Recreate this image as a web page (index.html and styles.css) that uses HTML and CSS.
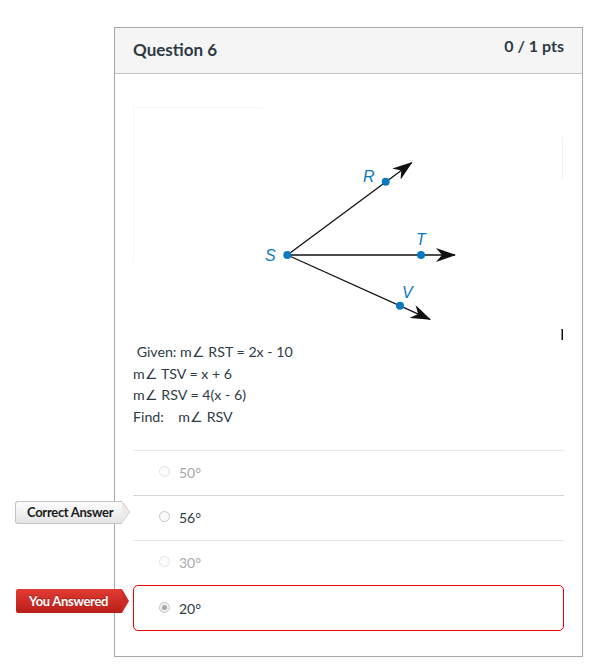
FILE: index.html
```html
<!DOCTYPE html>
<html>
<head>
<meta charset="utf-8">
<link rel="stylesheet" href="styles.css">
</head>
<body>
<div class="page">
  <div class="card">
    <div class="card-header">
      <h2 class="q-title">Question 6</h2>
      <div class="q-pts">0 / 1 pts</div>
    </div>
    <div class="card-body">
      <div class="figure">
        <svg class="diagram" width="430" height="233" viewBox="0 0 430 233">
          <defs>
            <marker id="ah" viewBox="0 0 20 14" refX="19" refY="7" markerWidth="20" markerHeight="14" markerUnits="userSpaceOnUse" orient="auto">
              <path d="M0,0 L20,7 L0,14 L6,7 Z" fill="#111"/>
            </marker>
          </defs>
          <line x1="0.5" y1="0" x2="0.5" y2="156" stroke="#f7f7f7" stroke-width="1"/>
          <line x1="0" y1="0.5" x2="130" y2="0.5" stroke="#f8f8f8" stroke-width="1"/>
          <line x1="429.5" y1="30" x2="429.5" y2="72" stroke="#f0f0f0" stroke-width="1"/>
          <line x1="429.5" y1="222" x2="429.5" y2="233" stroke="#111" stroke-width="2"/>
          <line x1="154.3" y1="148" x2="278.7" y2="55.7" stroke="#111" stroke-width="1.3" marker-end="url(#ah)"/>
          <line x1="154.3" y1="148" x2="322" y2="148" stroke="#111" stroke-width="1.3" marker-end="url(#ah)"/>
          <line x1="154.3" y1="148" x2="297" y2="212.3" stroke="#111" stroke-width="1.3" marker-end="url(#ah)"/>
          <circle cx="154.3" cy="148" r="4" fill="#0a7ac0"/>
          <circle cx="252.7" cy="74.7" r="4" fill="#0a7ac0"/>
          <circle cx="288" cy="148" r="4" fill="#0a7ac0"/>
          <circle cx="267" cy="198.7" r="4" fill="#0a7ac0"/>
          <text class="pt" x="230" y="75">R</text>
          <text class="pt" x="132" y="154">S</text>
          <text class="pt" x="283" y="138">T</text>
          <text class="pt" x="269" y="191">V</text>
        </svg>
      </div>
      <div class="given">
        <p class="line">&nbsp;Given: m∠ RST = 2x - 10</p>
        <p class="line">m∠ TSV = x + 6</p>
        <p class="line">m∠ RSV = 4(x - 6)</p>
        <p class="line">Find:&nbsp;&nbsp;&nbsp; m∠ RSV</p>
      </div>
      <div class="answers">
        <div class="answer light">
          <span class="radio disabled"></span>
          <span class="atext muted">50°</span>
        </div>
        <div class="answer dark">
          <span class="tag tag-correct">Correct Answer</span>
          <span class="radio"></span>
          <span class="atext">56°</span>
        </div>
        <div class="answer light">
          <span class="radio disabled"></span>
          <span class="atext muted">30°</span>
        </div>
        <div class="answer wrong">
          <span class="tag tag-wrong">You Answered</span>
          <span class="radio checked"></span>
          <span class="atext">20°</span>
        </div>
      </div>
    </div>
  </div>
</div>
</body>
</html>
```

FILE: styles.css
```css
html, body {
  margin: 0;
  padding: 0;
  background: #ffffff;
}
body {
  font-family: Lato, "Liberation Sans", sans-serif;
  color: #2d3b45;
}
.page {
  padding: 27px 0 0 114px;
}
.card {
  width: 467px;
  height: 628px;
  border: 1px solid #a8a8a8;
  background: #fff;
}
.card-header {
  height: 45px;
  background: #f5f5f5;
  border-bottom: 1px solid #c4c4c4;
  display: flex;
  justify-content: space-between;
  padding: 0 18px;
}
.q-title {
  margin: 0;
  font-size: 17px;
  font-weight: 700;
  line-height: 45px;
  color: #2d3b45;
  padding-top: 0;
  margin-top: -1px;
}
.q-pts {
  font-size: 16px;
  font-weight: 700;
  line-height: 18px;
  padding-top: 9px;
  color: #2d3b45;
}
.card-body {
  padding: 33px 18px 0 18px;
}
.figure {
  height: 233px;
}
.diagram {
  display: block;
}
.pt {
  font-family: "Liberation Sans", Arial, sans-serif;
  font-style: italic;
  font-size: 16px;
  fill: #0a7ac0;
}
.given {
  margin-top: 1px;
}
.line {
  margin: 0;
  font-size: 14.2px;
  line-height: 21.5px;
  color: #2d3b45;
}
.answers {
  margin-top: 23px;
}
.answer {
  position: relative;
  height: 45px;
  display: flex;
  align-items: center;
  padding-left: 26px;
  padding-bottom: 4px;
  box-sizing: border-box;
  border-top: 1px solid #e8e8e8;
}
.answer.dark {
  border-top-color: #d6d6d6;
}
.answer.wrong {
  border: 1px solid #ee0000;
  border-radius: 5px;
  height: 46px;
  padding-left: 25px;
  padding-bottom: 2px;
}
.radio {
  width: 11px;
  height: 11px;
  border-radius: 50%;
  border: 1px solid #c8c8c8;
  background: #fafafa;
  box-sizing: border-box;
  margin-right: 9px;
  position: relative;
  margin-top: 1px;
}
.radio.disabled {
  border-color: #e2e2e2;
  background: #fcfcfc;
}
.radio.checked {
  border-color: #c8c8c8;
  background: #f0f0f0;
}
.radio.checked::after {
  content: "";
  position: absolute;
  left: 2px;
  top: 2px;
  width: 5px;
  height: 5px;
  border-radius: 50%;
  background: #a8a8a8;
}
.atext {
  font-size: 14px;
  color: #2d3b45;
  margin-top: 2px;
}
.atext.muted {
  color: #a8a8a8;
}
.tag {
  position: absolute;
  left: -118px;
  height: 22px;
  line-height: 22px;
  font-size: 13px;
  font-weight: 700;
  letter-spacing: -0.3px;
  box-sizing: border-box;
  padding-left: 11px;
}
.tag::after {
  content: "";
  position: absolute;
  top: 0;
  right: -7px;
  width: 0;
  height: 0;
  border-top: 11px solid transparent;
  border-bottom: 11px solid transparent;
  border-left: 7px solid currentColor;
}
.tag-correct {
  top: 5px;
  width: 107px;
  color: #1a1a1a;
  background: linear-gradient(#fdfdfd, #e4e4e4);
  border: 1px solid #c4c4c4;
  border-right: none;
  border-radius: 3px 0 0 3px;
  height: 23px;
  line-height: 21px;
}
.tag-correct::before {
  content: "";
  position: absolute;
  top: -1px;
  right: -8px;
  width: 0;
  height: 0;
  border-top: 11.5px solid transparent;
  border-bottom: 11.5px solid transparent;
  border-left: 8px solid #c4c4c4;
}
.tag-correct::after {
  top: 0;
  border-top-width: 10.5px;
  border-bottom-width: 10.5px;
  border-left-color: #ececec;
}
.tag-wrong {
  top: 3px;
  width: 106px;
  color: #ffffff;
  background: linear-gradient(#e23b33, #b91e1a);
  border-radius: 2px 0 0 2px;
  height: 24px;
  line-height: 24px;
  padding-left: 13px;
  text-shadow: 0 -1px 0 rgba(0,0,0,0.3);
}
.tag-wrong::after {
  border-top-width: 12px;
  border-bottom-width: 12px;
  border-left-color: #cd2c26;
}
```
